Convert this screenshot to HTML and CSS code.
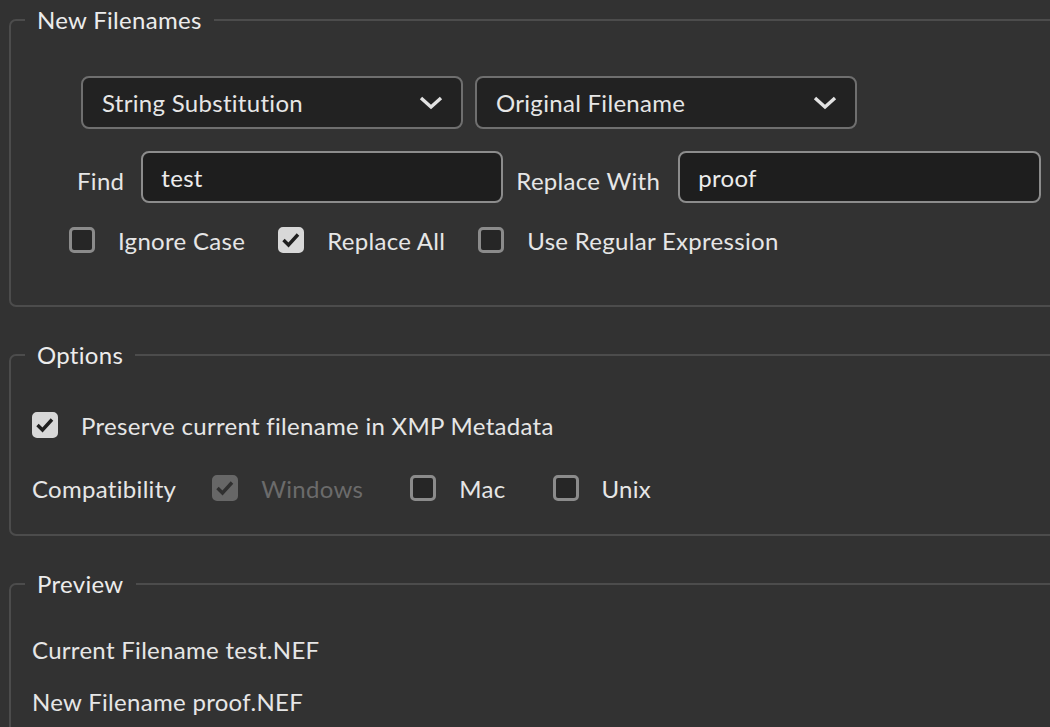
FILE: index.html
```html
<!DOCTYPE html>
<html lang="en">

<head>
    <meta charset="UTF-8">
    <meta name="viewport" content="width=device-width, initial-scale=1.0">
    <title>Batch Rename</title>
    <link rel="stylesheet" href="styles.css">
</head>

<body>
    <div id="dialog">

        <!-- New Filenames -->
        <fieldset class="panel" id="names">
            <legend>New Filenames</legend>

            <div class="select-row">
                <div class="select">
                    <span>String Substitution</span>
                    <svg class="chevron" width="24" height="14" viewBox="0 0 24 14">
                        <path d="M2 2 L12 11 L22 2" />
                    </svg>
                </div>
                <div class="select">
                    <span>Original Filename</span>
                    <svg class="chevron" width="24" height="14" viewBox="0 0 24 14">
                        <path d="M2 2 L12 11 L22 2" />
                    </svg>
                </div>
            </div>

            <div class="field-row">
                <label class="field-label" for="find">Find</label>
                <input class="text-input" id="find" type="text" value="test">
                <label class="field-label" id="replace-label" for="replace">Replace With</label>
                <input class="text-input" id="replace" type="text" value="proof">
            </div>

            <div class="check-row" id="name-checks">
                <div class="check-item">
                    <span class="box"></span>
                    <span>Ignore Case</span>
                </div>
                <div class="check-item">
                    <span class="box checked">
                        <svg width="20" height="20" viewBox="0 0 20 20"><path d="M2.5 10 L7.5 15 L17 4.5" /></svg>
                    </span>
                    <span>Replace All</span>
                </div>
                <div class="check-item">
                    <span class="box"></span>
                    <span>Use Regular Expression</span>
                </div>
            </div>
        </fieldset>

        <!-- Options -->
        <fieldset class="panel" id="options">
            <legend>Options</legend>

            <div class="check-row" id="preserve">
                <div class="check-item">
                    <span class="box checked">
                        <svg width="20" height="20" viewBox="0 0 20 20"><path d="M2.5 10 L7.5 15 L17 4.5" /></svg>
                    </span>
                    <span>Preserve current filename in XMP Metadata</span>
                </div>
            </div>

            <div class="check-row" id="compat">
                <span class="row-label">Compatibility</span>
                <div class="check-item disabled">
                    <span class="box checked">
                        <svg width="20" height="20" viewBox="0 0 20 20"><path d="M2.5 10 L7.5 15 L17 4.5" /></svg>
                    </span>
                    <span>Windows</span>
                </div>
                <div class="check-item">
                    <span class="box"></span>
                    <span>Mac</span>
                </div>
                <div class="check-item">
                    <span class="box"></span>
                    <span>Unix</span>
                </div>
            </div>
        </fieldset>

        <!-- Preview -->
        <fieldset class="panel" id="preview">
            <legend>Preview</legend>
            <div class="preview-line" id="current">Current Filename test.NEF</div>
            <div class="preview-line" id="new">New Filename proof.NEF</div>
        </fieldset>

    </div>
</body>

</html>
```

FILE: styles.css
```css
html,
body {
    margin: 0;
    height: 100%;
    overflow: hidden;
}

body {
    background-color: #323232;
    color: #e6e6e6;
    font-family: Lato, "Noto Sans", sans-serif;
    font-size: 24px;
    letter-spacing: 0.3px;
}

#dialog {
    width: 1120px;
    padding-top: 5px;
    padding-left: 9px;
}

/* group boxes */
.panel {
    margin: 0;
    padding: 0 0 0 21px;
    border: 2px solid #4c4c4c;
    border-radius: 7px;
    min-width: 0;
}

.panel legend {
    margin-left: -7px;
    padding: 0 12px;
    line-height: 30px;
    color: #ececec;
}

#names {
    padding-bottom: 50px;
}

#options {
    margin-top: 33px;
    padding-bottom: 31px;
}

#preview {
    margin-top: 33px;
    padding-bottom: 40px;
}

/* dropdowns */
.select-row {
    display: flex;
    gap: 12px;
    margin-top: 41px;
    margin-left: 49px;
}

.select {
    width: 382px;
    height: 53px;
    box-sizing: border-box;
    display: flex;
    align-items: center;
    justify-content: space-between;
    padding: 0 18px 0 19px;
    background-color: #222222;
    border: 2px solid #6f6f6f;
    border-radius: 8px;
}

.chevron path {
    fill: none;
    stroke: #e2e2e2;
    stroke-width: 3.4;
}

/* find / replace */
.field-row {
    display: flex;
    align-items: center;
    margin-top: 22px;
    margin-left: 45px;
}

.field-label {
    margin-top: 7px;
    margin-right: 17px;
}

#replace-label {
    margin-left: 13px;
    margin-right: 18px;
}

.text-input {
    width: 362px;
    height: 52px;
    box-sizing: border-box;
    padding: 0 18px;
    background-color: #1e1e1e;
    border: 2px solid #8c8c8c;
    border-radius: 8px;
    color: #ececec;
    font-family: inherit;
    font-size: 24px;
    letter-spacing: 0.3px;
    outline: none;
}

#replace {
    width: 363px;
}

/* checkboxes */
.check-row {
    display: flex;
    align-items: center;
    height: 30px;
}

#name-checks {
    margin-top: 22px;
    margin-left: 37px;
    gap: 33px;
}

#preserve {
    margin-top: 40px;
}

#compat {
    margin-top: 33px;
    gap: 47px;
}

#compat .row-label {
    margin-right: -11px;
}

.check-item {
    display: flex;
    align-items: center;
    gap: 23px;
}

.box {
    width: 26px;
    height: 26px;
    box-sizing: border-box;
    display: flex;
    align-items: center;
    justify-content: center;
    background-color: #262626;
    border: 3px solid #8b8b8b;
    border-radius: 5px;
}

.box.checked {
    background-color: #d8d8d8;
    border-color: #d8d8d8;
}

.box svg path {
    fill: none;
    stroke: #1f1f1f;
    stroke-width: 3.4;
}

.disabled {
    color: #6b6b6b;
}

.disabled .box.checked {
    background-color: #676767;
    border-color: #676767;
}

.disabled .box svg path {
    stroke: #303030;
}

/* preview */
.preview-line {
    line-height: 30px;
}

#current {
    margin-top: 36px;
}

#new {
    margin-top: 22px;
}
```
